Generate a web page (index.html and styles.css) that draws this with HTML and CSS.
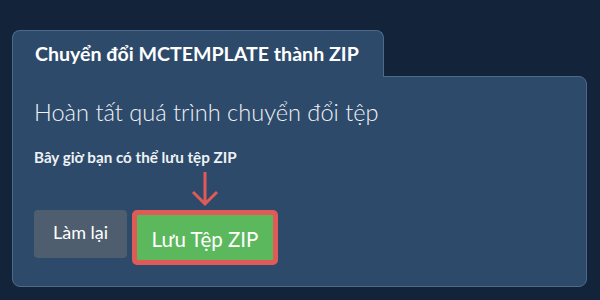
FILE: index.html
```html
<!DOCTYPE html>
<html>
<head>
	<meta charset="utf-8">
	<title>Chuyển đổi MCTEMPLATE thành ZIP</title>
	<link rel="stylesheet" href="styles.css">
</head>
<body>
<div class="card">
	<div class="tab">
		<h1>Chuyển đổi MCTEMPLATE thành ZIP</h1>
	</div>
	<div class="panel">
		<h2>Hoàn tất quá trình chuyển đổi tệp</h2>
		<p class="hint">Bây giờ bạn có thể lưu tệp ZIP</p>

		<div class="pointer">
			<svg width="28" height="36" viewBox="0 0 28 36">
				<path d="M14 1 V33 M2 21 L14 33 L26 21" fill="none" stroke="#e05b57" stroke-width="3"/>
			</svg>
		</div>

		<div class="actions">
			<button class="btn btn-again">Làm lại</button>
			<span class="highlight"><button class="btn btn-save">Lưu Tệp ZIP</button></span>
		</div>
	</div>
</div>
</body>
</html>
```

FILE: styles.css
```css
/* Reset */

* { margin: 0; padding: 0; box-sizing: border-box; }

body {
	background-color: #12233a;
	font-family: Lato, "Noto Sans", sans-serif;
	color: #eef2f6;
	padding: 30px 13px 0 12px;
}


/* Card */

.card {
	display: flex;
	flex-direction: column;
	align-items: flex-start;
}

.tab {
	background-color: #2d4a6a;
	border: solid 1px #4d6a8a;
	border-bottom: none;
	border-radius: 8px 8px 0 0;
	padding: 11px 24px 0 22px;
	height: 47px;
	margin-bottom: -1px;
	position: relative;
	z-index: 1;
}

.tab h1 {
	font-size: 19.6px;
	font-weight: bold;
	color: #ffffff;
}

.panel {
	align-self: stretch;
	background-color: #2d4a6a;
	border: solid 1px #4d6a8a;
	border-radius: 0 8px 8px 8px;
	height: 211px;
	padding: 21px 21px 0 21px;
}

.panel h2 {
	font-size: 23.6px;
	font-weight: 300;
	color: #eef2f6;
}

.hint {
	font-size: 15.2px;
	font-weight: bold;
	margin-top: 22px;
	color: #eef2f6;
}


/* Arrow pointing at the save button */

.pointer {
	margin-left: 157px;
	margin-top: 5px;
	height: 39px;
}

.pointer svg {
	display: block;
}


/* Buttons */

.actions {
	display: flex;
	align-items: flex-start;
	gap: 5px;
}

.btn {
	font-family: Lato, "Noto Sans", sans-serif;
	border: none;
	color: #ffffff;
	border-radius: 4px;
	cursor: pointer;
}

.btn-again {
	background-color: #4e5e6e;
	font-size: 18px;
	width: 93px;
	height: 48px;
	padding-bottom: 4px;
}

.highlight {
	display: block;
	border: solid 5px #e05b57;
	border-radius: 5px;
	background-color: #e05b57;
}

.btn-save {
	display: block;
	background-color: #5cb85c;
	border-radius: 0;
	font-size: 20.5px;
	width: 136px;
	height: 45px;
	padding-top: 2px;
}
```
